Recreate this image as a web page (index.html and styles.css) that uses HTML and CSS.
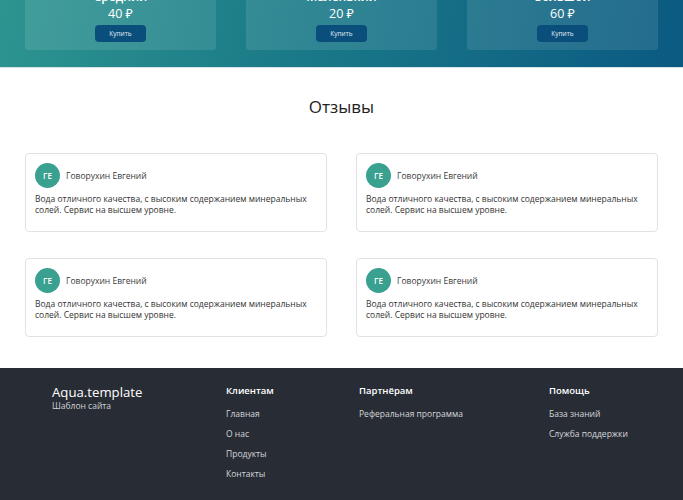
FILE: index.html
```html
<!DOCTYPE html>
<html lang="ru">
<head>
<meta charset="utf-8">
<title>Aqua.template</title>
<link rel="stylesheet" href="styles.css">
</head>
<body>
<section class="hero">
  <h2 class="hero-title">Тарифы</h2>
  <div class="plans">
    <div class="plan">
      <div class="plan-name">Средний</div>
      <div class="plan-price">40 ₽</div>
      <button class="buy">Купить</button>
    </div>
    <div class="plan">
      <div class="plan-name">Маленький</div>
      <div class="plan-price">20 ₽</div>
      <button class="buy">Купить</button>
    </div>
    <div class="plan">
      <div class="plan-name">Большой</div>
      <div class="plan-price">60 ₽</div>
      <button class="buy">Купить</button>
    </div>
  </div>
</section>

<section class="reviews">
  <h2 class="reviews-title">Отзывы</h2>
  <div class="review-grid">
    <div class="review">
      <div class="review-head"><span class="avatar">ГЕ</span><span class="author">Говорухин Евгений</span></div>
      <p class="review-text">Вода отличного качества, с высоким содержанием минеральных солей. Сервис на высшем уровне.</p>
    </div>
    <div class="review">
      <div class="review-head"><span class="avatar">ГЕ</span><span class="author">Говорухин Евгений</span></div>
      <p class="review-text">Вода отличного качества, с высоким содержанием минеральных солей. Сервис на высшем уровне.</p>
    </div>
    <div class="review">
      <div class="review-head"><span class="avatar">ГЕ</span><span class="author">Говорухин Евгений</span></div>
      <p class="review-text">Вода отличного качества, с высоким содержанием минеральных солей. Сервис на высшем уровне.</p>
    </div>
    <div class="review">
      <div class="review-head"><span class="avatar">ГЕ</span><span class="author">Говорухин Евгений</span></div>
      <p class="review-text">Вода отличного качества, с высоким содержанием минеральных солей. Сервис на высшем уровне.</p>
    </div>
  </div>
</section>

<footer class="footer">
  <div class="brand">
    <div class="logo">Aqua.template</div>
    <div class="tagline">Шаблон сайта</div>
  </div>
  <div class="fcol">
    <div class="fhead">Клиентам</div>
    <a class="flink" href="#">Главная</a>
    <a class="flink" href="#">О нас</a>
    <a class="flink" href="#">Продукты</a>
    <a class="flink" href="#">Контакты</a>
  </div>
  <div class="fcol">
    <div class="fhead">Партнёрам</div>
    <a class="flink" href="#">Реферальная программа</a>
  </div>
  <div class="fcol">
    <div class="fhead">Помощь</div>
    <a class="flink" href="#">База знаний</a>
    <a class="flink" href="#">Служба поддержки</a>
  </div>
</footer>
<script src="script.js"></script>
</body>
</html>
```

FILE: styles.css
```css
* { box-sizing: border-box; }
html, body { margin: 0; padding: 0; }
body {
  font-family: "Open Sans", "Noto Sans", sans-serif;
  color: #333;
  background: #fff;
}

.hero {
  background: linear-gradient(100deg, #2f9690 0%, #1a7a88 45%, #0b5a82 100%);
  padding: 40px 25px 17px;
  border-bottom: 1px solid #d6e4e8;
}
.hero-title {
  margin: 0 0 30px;
  text-align: center;
  color: #fff;
  font-weight: 400;
  font-size: 18px;
}
.plans {
  display: grid;
  grid-template-columns: repeat(3, 1fr);
  gap: 30px;
}
.plan {
  background: rgba(255, 255, 255, 0.1);
  border-radius: 3px;
  padding: 14px 0 8px;
  display: flex;
  flex-direction: column;
  align-items: center;
  color: #fff;
}
.plan-name {
  font-size: 12px;
  font-weight: 600;
  line-height: 16px;
}
.plan-price {
  font-size: 12.5px;
  line-height: 16px;
  margin-top: 1px;
}
.buy {
  margin-top: 3px;
  width: 51px;
  height: 17px;
  border: 0;
  border-radius: 4px;
  background: #0a4f7b;
  color: #e6eef4;
  font-family: inherit;
  font-size: 6.5px;
  padding: 0;
}

.reviews {
  padding: 27px 25px 31px;
}
.reviews-title {
  margin: 0 0 34px;
  text-align: center;
  font-weight: 400;
  font-size: 17px;
  line-height: 24px;
  color: #222;
}
.review-grid {
  display: grid;
  grid-template-columns: 1fr 1fr;
  column-gap: 29px;
  row-gap: 26px;
}
.review {
  border: 1px solid #e2e2e2;
  border-radius: 4px;
  padding: 9px 10px 14px 9px;
  height: 79px;
}
.review-head {
  display: flex;
  align-items: center;
  gap: 6px;
}
.avatar {
  width: 25px;
  height: 25px;
  border-radius: 50%;
  background: #3aa090;
  color: #fff;
  font-size: 8px;
  font-weight: 600;
  display: flex;
  align-items: center;
  justify-content: center;
}
.author {
  font-size: 8.5px;
  color: #3a3a3a;
}
.review-text {
  margin: 6px 0 0;
  font-size: 8.5px;
  line-height: 10.5px;
  color: #333;
}

.footer {
  background: #282c35;
  height: 132px;
  padding: 15px 52px 0;
  display: grid;
  grid-template-columns: 174px 133px 190px auto;
  align-items: start;
  color: #fff;
}
.logo {
  font-size: 13.2px;
  line-height: 18px;
  color: #fff;
}
.tagline {
  font-size: 8.5px;
  line-height: 10px;
  color: #d0d2d6;
}
.fcol {
  display: flex;
  flex-direction: column;
  padding-top: 1px;
}
.fhead {
  font-size: 9.5px;
  font-weight: 600;
  line-height: 14px;
  margin-bottom: 6px;
}
.flink {
  font-size: 8.5px;
  line-height: 20px;
  color: #d4d6da;
  text-decoration: none;
}
```

FILE: script.js
```js
window.addEventListener('load', function () {
  window.scrollTo(0, document.documentElement.scrollHeight);
});
window.scrollTo(0, document.documentElement.scrollHeight);
```
